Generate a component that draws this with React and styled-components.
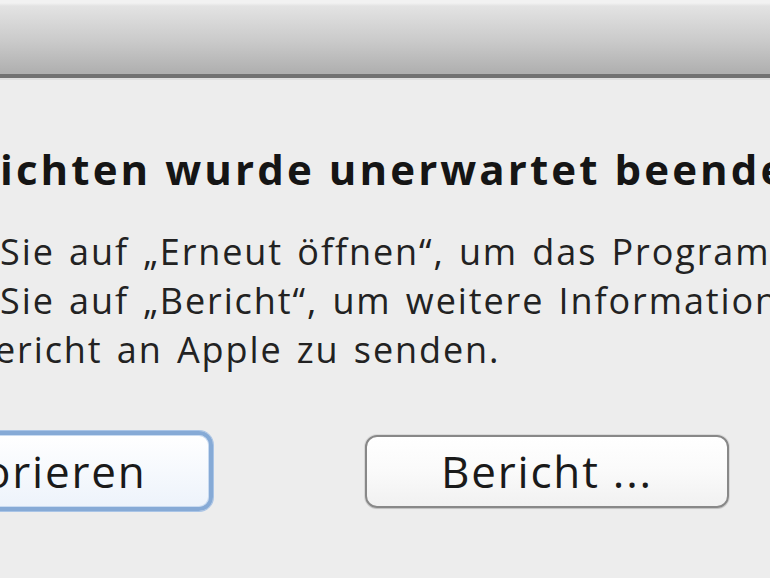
import styled, { createGlobalStyle } from "styled-components";

const GlobalStyle = createGlobalStyle`
  html, body {
    margin: 0;
    padding: 0;
    background: #ededed;
  }
  * {
    box-sizing: border-box;
  }
`;

export default function App() {
    return (
        <>
            <GlobalStyle/>
            <Window>
                <TitleBar/>
                <Content>
                    <Heading>ichten wurde unerwartet beendet.</Heading>
                    <Message>
                        <Line>Sie auf „Erneut öffnen“, um das Programm erneut zu öffnen.</Line>
                        <Line>Sie auf „Bericht“, um weitere Informationen anzuzeigen und einen</Line>
                        <Line indent={-5}>ericht an Apple zu senden.</Line>
                    </Message>
                    <Buttons>
                        <Button primary>Ignorieren</Button>
                        <Button>Bericht ...</Button>
                        <Button>Erneut öffnen</Button>
                    </Buttons>
                </Content>
            </Window>
        </>
    );
}

const Window = styled.div`
  width: 770px;
  height: 578px;
  overflow: hidden;
  background: #ededed;
  display: flex;
  flex-direction: column;
  font-family: "Open Sans", "DejaVu Sans", sans-serif;
  color: #1c1c1c;
`

const TitleBar = styled.div`
  flex: 0 0 78px;
  background: linear-gradient(180deg, #f2f2f2 0px, #f2f2f2 3px, #e3e3e3 6px, #cbcbcb 40px, #b0b0b0 72px);
  border-bottom: 4px solid #727272;
  box-shadow: 0 2px 0 #e0e0e0;
`

const Content = styled.div`
  display: flex;
  flex-direction: column;
  padding-top: 66px;
  white-space: nowrap;
`

const Heading = styled.h1`
  margin: 0;
  font-size: 42px;
  font-weight: 700;
  line-height: 50px;
  letter-spacing: 3.1px;
  color: #151515;
`

const Message = styled.div`
  margin-top: 33px;
  display: flex;
  flex-direction: column;
  font-size: 36px;
  line-height: 49px;
  letter-spacing: 1.9px;
  word-spacing: 3px;
  color: #222;
`

const Line = styled.div`
  margin-left: ${({indent}) => indent || 0}px;
`

const Buttons = styled.div`
  margin-top: 57px;
  margin-left: -151px;
  display: flex;
  align-items: center;
  gap: 152px;

  & > :nth-child(3) {
    margin-left: -100px;
  }
`

const Button = styled.button`
  flex: 0 0 auto;
  width: 364px;
  height: ${({primary}) => primary ? 80 : 73}px;
  padding: 0;
  font-family: inherit;
  font-size: 44px;
  line-height: 1;
  letter-spacing: 1.8px;
  color: #1a1a1a;
  border-radius: ${({primary}) => primary ? 14 : 12}px;
  border: ${({primary}) => primary ? '4px solid #86aad6' : '2px solid #888888'};
  background: ${({primary}) => primary
    ? 'linear-gradient(180deg, #ffffff 0%, #f6f9fd 50%, #edf3fb 100%)'
    : 'linear-gradient(180deg, #ffffff 0%, #fafafa 50%, #f1f1f1 100%)'};
  box-shadow: ${({primary}) => primary
    ? '0 0 0 1px #a9c4e6, inset 0 0 0 1px #c9dbf1'
    : '0 0 0 1px rgba(0,0,0,0.08), 0 1px 1px rgba(0,0,0,0.12)'};
  white-space: nowrap;
`
